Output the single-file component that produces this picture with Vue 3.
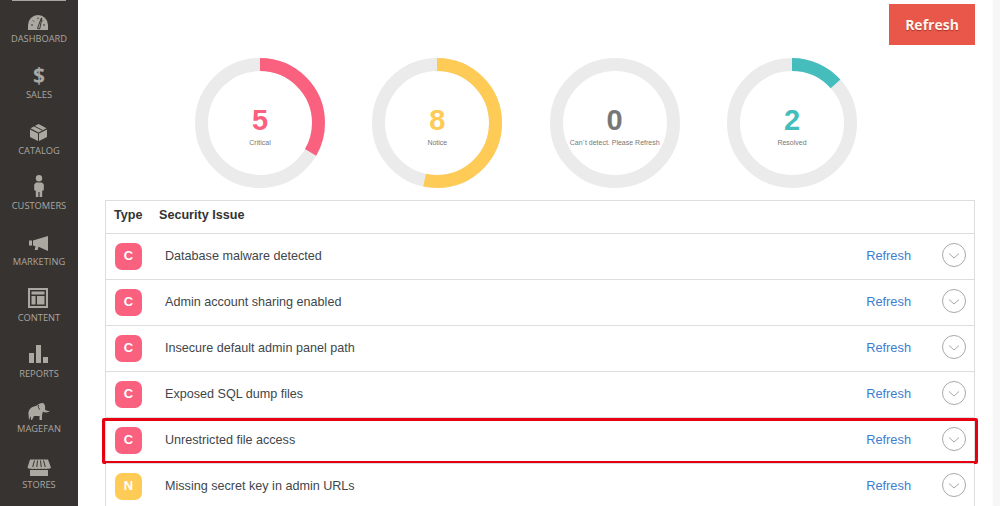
<script setup>
const nav = [
  { label: 'Dashboard', key: 'dash' },
  { label: 'Sales', key: 'sales' },
  { label: 'Catalog', key: 'catalog' },
  { label: 'Customers', key: 'customers' },
  { label: 'Marketing', key: 'marketing' },
  { label: 'Content', key: 'content' },
  { label: 'Reports', key: 'reports' },
  { label: 'Magefan', key: 'magefan' },
  { label: 'Stores', key: 'stores' },
]
const R = 58.5
const C = 2 * Math.PI * R
const donuts = [
  { value: 5, label: 'Critical', color: '#f9617f', part: 5 / 15 },
  { value: 8, label: 'Notice', color: '#ffcb57', part: 8 / 15 },
  { value: 0, label: 'Can`t detect. Please Refresh', color: '#777777', part: 0 },
  { value: 2, label: 'Resolved', color: '#45bdbd', part: 2 / 15 },
]
const rows = [
  { type: 'C', title: 'Database malware detected' },
  { type: 'C', title: 'Admin account sharing enabled' },
  { type: 'C', title: 'Insecure default admin panel path' },
  { type: 'C', title: 'Exposed SQL dump files' },
  { type: 'C', title: 'Unrestricted file access', marked: true },
  { type: 'N', title: 'Missing secret key in admin URLs' },
]
</script>

<template>
  <div class="page">
    <nav class="side">
      <div class="side-top"></div>
      <a v-for="n in nav" :key="n.key" class="nav-item">
        <span v-if="n.key === 'sales'" class="nav-glyph">$</span>
        <svg v-else class="nav-icon" viewBox="0 0 30 26" width="30" height="26">
          <template v-if="n.key === 'dash'">
            <path d="M4 24v-5a10 10 0 0 1 20 0v5z" />
            <path class="cut" d="M13.5 22.5l3.8-10.5.6.3-2.2 10.6zM7 19h2M9 14.5l1 1M14 11.5v1.6M19 14.5l-1 1M21 19h-2" />
          </template>
          <template v-else-if="n.key === 'catalog'">
            <path d="M6 11.5l8 4V23l-8-4zM15 15.5l8-4V19l-8 4zM14.5 6l8 4.3-8 4.2-8-4.2z" />
            <path class="cut" d="M10 8l8.5 4.3" />
          </template>
          <template v-else-if="n.key === 'customers'">
            <circle cx="15" cy="5.2" r="3.200" />
            <path d="M12 9.500h6l1.800 2V17l-1.600 1v6h-2.600v-5h-1.200v5h-2.600v-6l-1.600-1v-5.500z" />
          </template>
          <template v-else-if="n.key === 'marketing'">
            <path d="M5 11.500h3v5H5zM9 11.500L24 7v15l-9.500-4.200-.8 3.200h-3l.8-3.800L9 16.500z" />
          </template>
          <template v-else-if="n.key === 'content'">
            <path fill-rule="evenodd" d="M4 3h20v20H4zM6 5v16h16V5z" />
            <path d="M7.500 6.500h13v3h-13zM7.500 11h4v8.500h-4zM13 11h7.500v8.500H13z" />
          </template>
          <template v-else-if="n.key === 'reports'">
            <path d="M5 12h5v10H5zM12 4h5v18h-5zM19 16h5v6h-5z" />
          </template>
          <template v-else-if="n.key === 'magefan'">
            <path d="M5 24l-.6-7C5 12.500 8 10.500 12 10c2-2 5-3.500 7-3 2 .8 2.500 4 2 6.500 1 1.500 3 1.700 5 1.200-1.500 1.800-5 2.300-7 .8l-1 3.500v5h-2.500v-4h-5.500l-2 4H7v-4z" />
            <path class="cut" d="M14.500 9c-.5 2 0 3.500 1.500 4.500" />
          </template>
          <template v-else-if="n.key === 'stores'">
            <path d="M6 7.500h18l3 8q-1.500 2-3.400 1-1.600 1-3.300 0-1.700 1-3.300 0-1.700 1-3.400 0-1.700 1-3.300 0-1.700 1-3.300 0-2 1-3.500-1zM6 18h18v6H6z" />
            <path class="cut" d="M10.500 8.500L8.700 15M13.500 8.500L12.800 15M16.500 8.500L17.200 15M19.500 8.500L21.300 15" />
          </template>
        </svg>
        <span class="nav-label">{{ n.label }}</span>
      </a>
    </nav>

    <main class="main">
      <div class="toolbar">
        <button class="refresh-btn">Refresh</button>
      </div>

      <section class="donuts">
        <div v-for="d in donuts" :key="d.label" class="donut">
          <svg viewBox="0 0 130 130" width="130" height="130">
            <circle cx="65" cy="65" :r="R" class="track" />
            <circle
              cx="65"
              cy="65"
              :r="R"
              class="arc"
              :stroke="d.color"
              :stroke-dasharray="`${C * d.part} ${C}`"
              transform="rotate(-90 65 65)"
            />
          </svg>
          <div class="donut-text">
            <strong class="donut-value" :style="{ color: d.color }">{{ d.value }}</strong>
            <span class="donut-label">{{ d.label }}</span>
          </div>
        </div>
      </section>

      <section class="table">
        <div class="head">
          <span class="head-type">Type</span>
          <span>Security Issue</span>
        </div>
        <div v-for="r in rows" :key="r.title" class="row">
          <span class="badge" :class="r.type === 'C' ? 'badge-c' : 'badge-n'">{{ r.type }}</span>
          <span class="issue">{{ r.title }}</span>
          <a class="link">Refresh</a>
          <span class="toggle">
            <svg viewBox="0 0 24 24" width="24" height="24">
              <circle cx="12" cy="12" r="11.500" />
              <path d="M7 10.500l5 4.500 5-4.500" />
            </svg>
          </span>
          <div v-if="r.marked" class="mark"></div>
        </div>
      </section>
    </main>
    <div class="edge"></div>
  </div>
</template>

<style>
html, body { margin: 0; background: #fff; overflow: hidden; }
</style>

<style scoped>
.page {
  display: flex;
  width: 1000px;
  height: 506px;
  overflow: hidden;
  background: #fff;
  font-family: "Liberation Sans", Arial, sans-serif;
}
.side {
  flex: 0 0 78px;
  background: #373330;
}
.side-top {
  height: 1px;
  margin: 0 12px 5px;
  background: #a8a49e;
}
.nav-item {
  display: flex;
  flex-direction: column;
  align-items: center;
  height: 55.75px;
}
.nav-icon {
  display: block;
  flex: none;
  fill: #aba7a1;
}
.nav-icon .cut {
  fill: none;
  stroke: #373330;
  stroke-width: 1;
}
.nav-glyph {
  display: block;
  flex: none;
  height: 26px;
  font-family: "Open Sans", sans-serif;
  font-weight: 700;
  font-size: 21px;
  line-height: 26px;
  color: #aba7a1;
}
.nav-label {
  margin-top: 1px;
  font-family: "Open Sans", sans-serif;
  font-size: 9.3px;
  line-height: 12px;
  text-transform: uppercase;
  color: #aaa6a0;
}
.main {
  flex: 0 0 907px;
  min-width: 0;
  box-sizing: border-box;
  padding: 4px 10px 0 27px;
  overflow: hidden;
}
.toolbar {
  display: flex;
  justify-content: flex-end;
}
.refresh-btn {
  width: 86px;
  height: 41px;
  padding: 0;
  border: 0;
  background: #e9574a;
  color: #fff4ea;
  font-family: "Open Sans", sans-serif;
  font-weight: 700;
  font-size: 14px;
  text-shadow: 0 1px 1px rgba(120, 30, 20, .6);
}
.donuts {
  display: flex;
  gap: 47.33px;
  margin: 13px 0 0 90px;
}
.donut {
  position: relative;
  flex: none;
  width: 130px;
  height: 130px;
}
.donut svg {
  display: block;
}
.track, .arc {
  fill: none;
  stroke-width: 13;
}
.track {
  stroke: #ebebeb;
}
.donut-text {
  position: absolute;
  inset: 0;
  display: flex;
  flex-direction: column;
  align-items: center;
  padding-top: 46px;
  box-sizing: border-box;
}
.donut-value {
  font-size: 29px;
  line-height: 33px;
  font-weight: 700;
}
.donut-label {
  font-size: 7px;
  line-height: 9px;
  margin-top: 1px;
  color: #777;
  white-space: nowrap;
}
.table {
  width: 870px;
  box-sizing: border-box;
  margin-top: 12px;
  border: 1px solid #ddd;
  border-bottom: 0;
}
.head {
  display: flex;
  align-items: center;
  box-sizing: border-box;
  height: 32px;
  padding: 0 0 4px 8px;
  font-size: 12.6px;
  font-weight: 700;
  color: #333;
}
.head-type {
  width: 45px;
}
.row {
  position: relative;
  display: flex;
  align-items: center;
  height: 45px;
  border-top: 1px solid #ddd;
  padding-left: 9px;
  font-size: 12.6px;
  color: #41464b;
}
.badge {
  flex: none;
  display: flex;
  align-items: center;
  justify-content: center;
  box-sizing: border-box;
  width: 27px;
  height: 27px;
  padding-bottom: 2px;
  border-radius: 7px;
  color: #fff;
  font-weight: 700;
  font-size: 13px;
}
.badge-c { background: #f9617f; }
.badge-n { background: #ffcb57; }
.issue {
  flex: 1;
  margin: -2px 0 0 23px;
}
.link {
  color: #3d7dd0;
  margin: -2px 31px 0 0;
  font-size: 12.8px;
}
.toggle {
  display: block;
  width: 24px;
  height: 24px;
  margin: -3px 8px 0 0;
}
.toggle svg {
  display: block;
  fill: none;
  stroke: #a9a9a9;
  stroke-width: 1;
}
.mark {
  position: absolute;
  left: -4px;
  right: -4px;
  top: 0;
  height: 46px;
  box-sizing: border-box;
  border: 3px solid #e60012;
  border-radius: 2px;
}
.edge {
  flex: 0 0 15px;
  background: linear-gradient(to right, #fff 0, #fff 45%, #f6f6f6 60%, #f7f7f7 100%);
}
</style>
